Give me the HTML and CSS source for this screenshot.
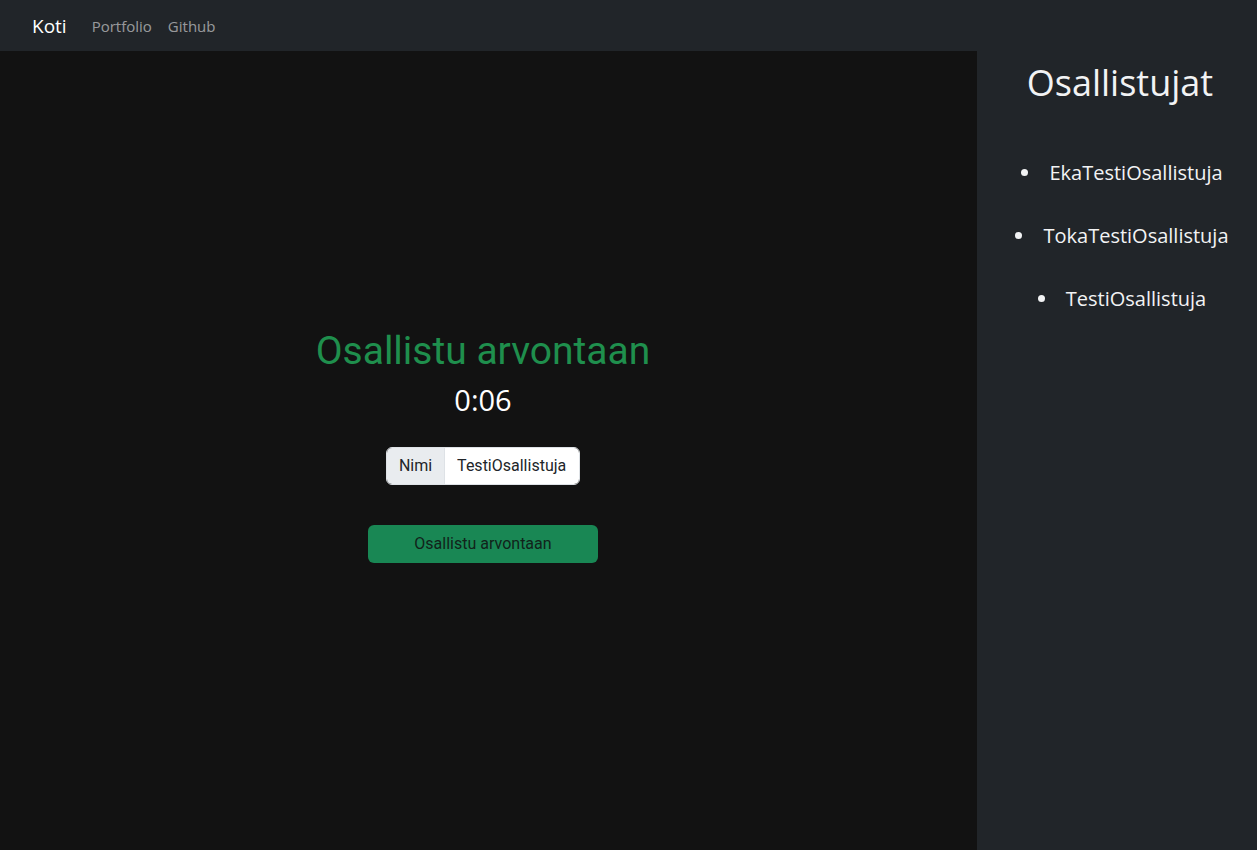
FILE: index.html
```html
<!DOCTYPE html>
<html lang="fi">
<head>
<meta charset="utf-8">
<title>Arvonta</title>
<link rel="stylesheet" href="styles.css">
</head>
<body>
<nav class="navbar">
  <a class="brand" href="#">Koti</a>
  <a class="nav-link" href="#">Portfolio</a>
  <a class="nav-link" href="#">Github</a>
</nav>
<div class="layout">
  <main class="main">
    <div class="panel">
      <h1 class="title">Osallistu arvontaan</h1>
      <div class="timer">0:06</div>
      <div class="input-group">
        <span class="addon">Nimi</span>
        <input class="field" type="text" value="TestiOsallistuja">
      </div>
      <button class="btn">Osallistu arvontaan</button>
    </div>
  </main>
  <aside class="sidebar">
    <h2 class="side-title">Osallistujat</h2>
    <ul class="list">
      <li>EkaTestiOsallistuja</li>
      <li>TokaTestiOsallistuja</li>
      <li>TestiOsallistuja</li>
    </ul>
  </aside>
</div>
</body>
</html>
```
FILE: styles.css
```css
* { box-sizing: border-box; }
html, body { margin: 0; height: 100%; }
body {
  background: #121212;
  color: #fff;
  font-family: "Open Sans", "Noto Sans", sans-serif;
  display: flex;
  flex-direction: column;
  height: 850px;
  overflow: hidden;
}
.navbar {
  height: 51px;
  background: #212529;
  display: flex;
  align-items: center;
  padding: 0 32px;
  flex: none;
}
.brand {
  color: #fff;
  text-decoration: none;
  font-size: 19px;
  margin-right: 17px;
}
.nav-link {
  color: rgba(255,255,255,0.55);
  text-decoration: none;
  font-size: 15px;
  padding: 0 8px;
}
.layout {
  flex: 1;
  display: flex;
}
.main {
  width: 977px;
  display: flex;
  align-items: center;
  justify-content: center;
  padding: 0 11px 12px 0;
}
.panel {
  display: flex;
  flex-direction: column;
  align-items: center;
}
.title {
  font-family: Roboto, sans-serif;
  font-weight: 400;
  font-size: 39px;
  line-height: 48px;
  color: #1f8f4d;
  margin: 0;
}
.timer {
  font-size: 29px;
  line-height: 40px;
  margin-top: 5px;
}
.input-group {
  display: flex;
  margin-top: 27px;
  height: 38px;
  border-radius: 6px;
  overflow: hidden;
  border: 1px solid #dee2e6;
  font-family: Roboto, sans-serif;
  font-size: 16px;
}
.addon {
  background: #e9ecef;
  color: #212529;
  padding: 0 12px;
  display: flex;
  align-items: center;
  border-right: 1px solid #dee2e6;
}
.field {
  border: 0;
  outline: none;
  width: 134px;
  padding: 0 12px;
  font: inherit;
  color: #212529;
  background: #fff;
}
.btn {
  margin-top: 40px;
  width: 230px;
  height: 38px;
  border: 0;
  border-radius: 6px;
  background: #198754;
  color: #11231a;
  font-family: Roboto, sans-serif;
  font-size: 16px;
}
.sidebar {
  flex: 1;
  background: #212529;
  text-align: center;
  padding-top: 8px;
}
.side-title {
  font-weight: 400;
  font-size: 36px;
  line-height: 48px;
  margin: 0 0 0 6px;
  color: #f2f3f4;
}
.list {
  list-style-position: inside;
  padding: 0 0 0 10px;
  margin: 52px 0 0;
}
.list li {
  font-size: 20px;
  line-height: 27px;
  margin-bottom: 36px;
  color: #f2f3f4;
}
```
